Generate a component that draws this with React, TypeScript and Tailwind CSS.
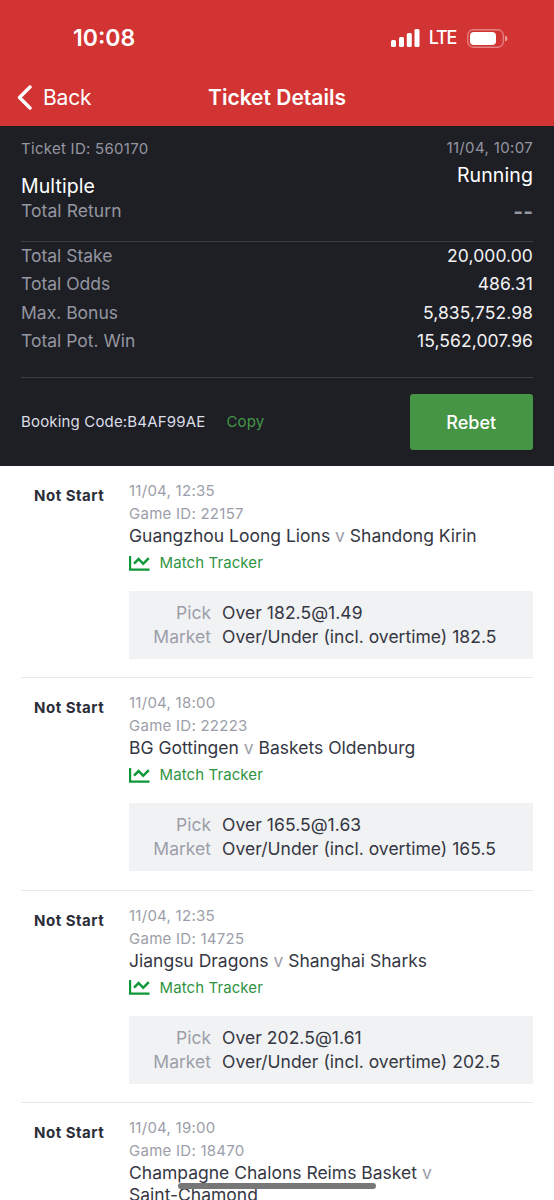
interface Detail {
  label: string;
  value: string;
}

interface Match {
  time: string;
  gameId: string;
  home: string;
  away: string;
  pick: string;
  market: string;
}

const details: Detail[] = [
  { label: "Total Stake", value: "20,000.00" },
  { label: "Total Odds", value: "486.31" },
  { label: "Max. Bonus", value: "5,835,752.98" },
  { label: "Total Pot. Win", value: "15,562,007.96" },
];

const matches: Match[] = [
  {
    time: "11/04, 12:35",
    gameId: "22157",
    home: "Guangzhou Loong Lions",
    away: "Shandong Kirin",
    pick: "Over 182.5@1.49",
    market: "Over/Under (incl. overtime) 182.5",
  },
  {
    time: "11/04, 18:00",
    gameId: "22223",
    home: "BG Gottingen",
    away: "Baskets Oldenburg",
    pick: "Over 165.5@1.63",
    market: "Over/Under (incl. overtime) 165.5",
  },
  {
    time: "11/04, 12:35",
    gameId: "14725",
    home: "Jiangsu Dragons",
    away: "Shanghai Sharks",
    pick: "Over 202.5@1.61",
    market: "Over/Under (incl. overtime) 202.5",
  },
];

const lastMatch = {
  time: "11/04, 19:00",
  gameId: "18470",
  home: "Champagne Chalons Reims Basket",
  away: "Saint-Chamond",
};

const StatusBar = () => (
  <div className="flex h-[76px] items-center justify-between pl-[73px] pr-[46px]">
    <span className="text-[23px] leading-none font-semibold">10:08</span>
    <div className="flex items-center">
      <svg width="29" height="18" viewBox="0 0 29 18" fill="currentColor">
        <rect x="0" y="11" width="5" height="7" rx="1.5" />
        <rect x="8" y="8" width="5" height="10" rx="1.5" />
        <rect x="15.8" y="4" width="5" height="14" rx="1.5" />
        <rect x="23.5" y="0" width="5" height="18" rx="1.5" />
      </svg>
      <span className="ml-[9px] text-[18px] leading-none font-medium tracking-[-1.3px]">
        LTE
      </span>
      <svg
        className="ml-[11px]"
        width="41"
        height="19"
        viewBox="0 0 41 19"
        fill="none"
      >
        <rect
          x="0.75"
          y="0.75"
          width="35.5"
          height="17.5"
          rx="5.5"
          stroke="#fff"
          strokeOpacity="0.4"
          strokeWidth="1.3"
        />
        <rect x="3" y="3" width="26" height="13" rx="3.8" fill="#fff" />
        <path
          d="M38 6.5c1.8.6 2.4 1.6 2.4 3s-.6 2.4-2.4 3z"
          fill="#fff"
          fillOpacity="0.5"
        />
      </svg>
    </div>
  </div>
);

const TrackerIcon = () => (
  <svg width="21" height="15" viewBox="0 0 21 15" fill="none" stroke="#0d9737">
    <path d="M1.1 0v13.6H20.5" strokeWidth="2.2" />
    <path d="M5 7.6l4.6-4.6 4.6 4.8 5.6-5.6" strokeWidth="2.5" />
  </svg>
);

const MatchHeading = ({
  match,
}: {
  match: Pick<Match, "time" | "gameId" | "home" | "away">;
}) => (
  <>
    <div className="text-[15px] leading-[23px] tracking-[0.26px] text-[#9c9ea9]">
      <p>{match.time}</p>
      <p>Game ID: {match.gameId}</p>
    </div>
    <p className="text-[17.5px] leading-[22px] text-[#353743]">
      {match.home} <span className="text-[#9c9ea9]">v</span>{" "}
      <span className="whitespace-nowrap">{match.away}</span>
    </p>
  </>
);

const MatchStatus = () => (
  <div className="w-[108px] shrink-0 pt-[19px] pl-[13px] text-[15px] leading-[22px] font-bold tracking-[0.5px] text-[#2b2d38]">
    Not Start
  </div>
);

const MatchItem = ({ match }: { match: Match }) => (
  <div className="mx-[21px] flex h-[212.4px] shrink-0 border-b border-[#e6e7ee]">
    <MatchStatus />
    <div className="flex-1 pt-[13px]">
      <MatchHeading match={match} />
      <div className="mt-[5px] flex h-[22px] items-center gap-[9.5px]">
        <TrackerIcon />
        <span className="text-[15px] tracking-[0.1px] text-[#2f9440]">
          Match Tracker
        </span>
      </div>
      <div className="mt-[17px] grid h-[68px] grid-cols-[82px_1fr] content-center gap-x-[11px] bg-[#f1f2f4] text-[17.5px] leading-[24px] text-[#353743]">
        <span className="text-right text-[#9c9ea9]">Pick</span>
        <span className="tracking-[0.05px]">{match.pick}</span>
        <span className="text-right text-[#9c9ea9]">Market</span>
        <span className="tracking-[0.02px] whitespace-nowrap">
          {match.market}
        </span>
      </div>
    </div>
  </div>
);

export default function App() {
  return (
    <div className="relative flex h-[1200px] w-[554px] flex-col overflow-hidden bg-white font-['Inter',sans-serif]">
      {/* Header */}
      <header className="h-[126px] shrink-0 bg-[#d23333] text-white">
        <StatusBar />
        <div className="grid h-[43px] grid-cols-[1fr_auto_1fr] items-center px-[17px]">
          <button className="flex items-center gap-[11px] text-[21px] leading-none tracking-[-0.2px]">
            <svg width="15" height="25" viewBox="0 0 15 25" fill="none">
              <path
                d="M13 2L2.5 12.5 13 23"
                stroke="#fff"
                strokeWidth="3.4"
                strokeLinecap="round"
                strokeLinejoin="round"
              />
            </svg>
            Back
          </button>
          <h1 className="text-[21px] leading-none font-semibold">
            Ticket Details
          </h1>
        </div>
      </header>

      {/* Ticket summary */}
      <section className="h-[339.7px] shrink-0 bg-[#1e1f25] px-[21px] text-[#9496a0]">
        <div className="flex h-[116px] justify-between border-b border-[#3c3d43]">
          <div>
            <p className="pt-[12px] text-[15px] leading-[22px] tracking-[0.28px]">
              Ticket ID: 560170
            </p>
            <p className="mt-[13px] text-[19.5px] leading-[26px] tracking-[0.1px] text-white">
              Multiple
            </p>
            <p className="text-[17.5px] leading-[24px] tracking-[0.07px]">
              Total Return
            </p>
          </div>
          <div className="text-right">
            <p className="pt-[11px] text-[15px] leading-[22px] tracking-[0.35px]">
              11/04, 10:07
            </p>
            <p className="mt-[3px] text-[19.5px] leading-[26px] tracking-[0.1px] text-white">
              Running
            </p>
            <p className="mt-[12px] text-[21px] leading-[24px] font-bold">--</p>
          </div>
        </div>
        <div className="h-[136px] border-b border-[#3c3d43] text-[17.5px] leading-[28.3px]">
          {details.map((detail) => (
            <div key={detail.label} className="flex justify-between">
              <span>{detail.label}</span>
              <span className="tracking-[0.08px] text-[#f2f2f4]">
                {detail.value}
              </span>
            </div>
          ))}
        </div>
        <div className="mt-[16px] flex h-[56px] items-center text-[15px] tracking-[0.17px]">
          <span className="text-[#dcdde6]">Booking Code:B4AF99AE</span>
          <button className="ml-[21px] text-[#439645]">Copy</button>
          <button className="ml-auto h-[56px] w-[123.5px] rounded-[3px] bg-[#459545] pt-px text-[18px] font-medium tracking-normal text-white">
            Rebet
          </button>
        </div>
      </section>

      {/* Matches */}
      <section className="flex flex-col pt-[0.4px]">
        {matches.map((match) => (
          <MatchItem key={match.gameId} match={match} />
        ))}
        <div className="mx-[21px] flex">
          <MatchStatus />
          <div className="flex-1 pt-[13px] pr-[60px]">
            <MatchHeading match={lastMatch} />
          </div>
        </div>
      </section>

      {/* Home indicator */}
      <div className="absolute bottom-[11px] left-[178px] h-[6px] w-[198px] rounded-full bg-[#777777]" />
    </div>
  );
}
